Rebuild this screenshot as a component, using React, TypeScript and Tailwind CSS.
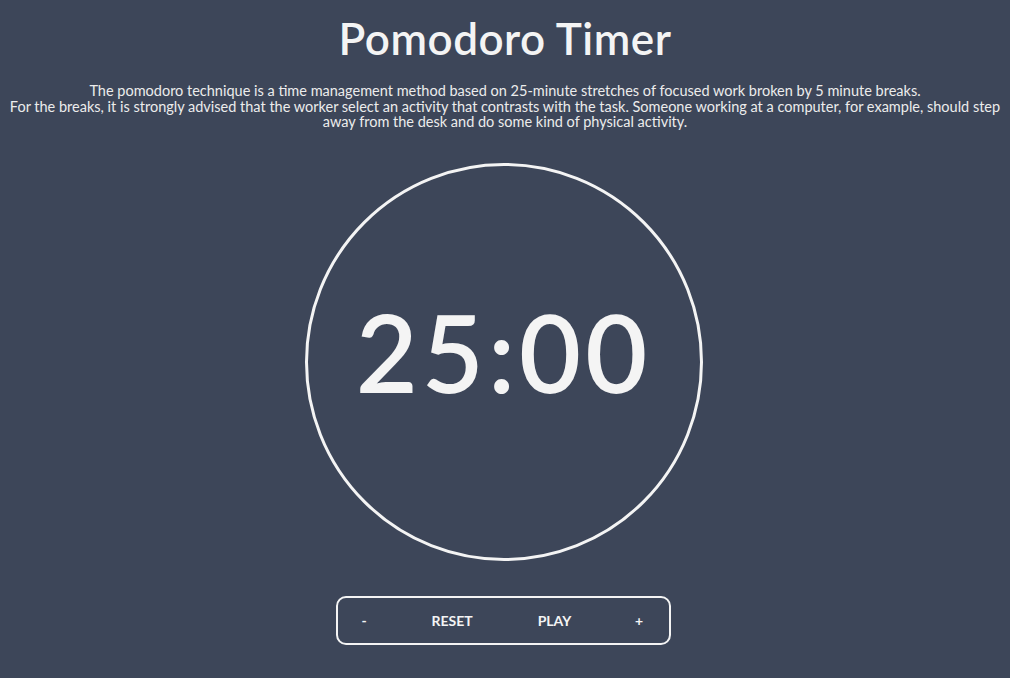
import { useState } from 'react';

export default function App() {
  const [minutes, setMinutes] = useState(25);

  return (
    <div className="min-h-screen bg-[#3d4659] text-[#f4f4f4] flex flex-col items-center font-['Lato',sans-serif]">
      <h1 className="mt-[12px] text-[44px] leading-[52px] font-semibold tracking-[0.5px]">Pomodoro Timer</h1>
      <p className="mt-[19px] px-[4px] text-center text-[14.5px] leading-[15.5px] text-[#ececec]">
        The pomodoro technique is a time management method based on 25-minute stretches of focused work broken by 5 minute breaks.
        <br />
        For the breaks, it is strongly advised that the worker select an activity that contrasts with the task. Someone working at a computer, for example, should step
        <br />
        away from the desk and do some kind of physical activity.
      </p>

      <div className="mt-[33px] mr-[3px] w-[398px] h-[398px] rounded-full border-[3px] border-[#f4f4f4] flex items-center justify-center">
        <span className="text-[107px] leading-none font-semibold tracking-[4px] pb-[20px]">{String(minutes).padStart(2, '0')}:00</span>
      </div>

      <div className="mt-[35px] mr-[3px] w-[335px] h-[49px] rounded-[10px] border-2 border-[#f4f4f4] flex items-center text-[14px] font-bold">
        <button className="w-[52px] text-center uppercase" onClick={() => setMinutes(m => Math.max(1, m - 1))}>-</button>
        <button className="w-[124px] text-center uppercase">Reset</button>
        <button className="w-[81px] text-center uppercase">Play</button>
        <button className="w-[74px] pl-[14px] text-center uppercase" onClick={() => setMinutes(m => m + 1)}>+</button>
      </div>
    </div>
  );
}
